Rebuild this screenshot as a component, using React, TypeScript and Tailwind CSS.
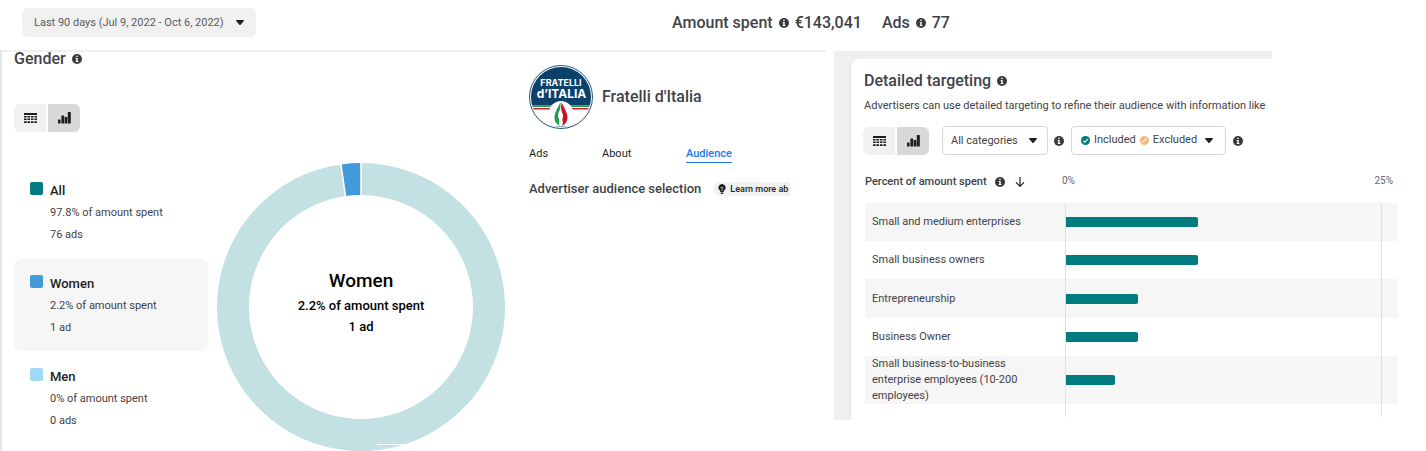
import React from "react";

function InfoIcon() {
  return (
    <svg viewBox="0 0 10 10" className="size-[10px] shrink-0" role="img" aria-label="More information">
      <circle cx="5" cy="5" r="5" fill="#3a3b3d" />
      <path d="M4.200 1.700h1.500v1.400H4.200zM3.700 4.100h2v3h.7v.9H3.700v-.9h.6V5h-.6z" fill="#fff" />
    </svg>
  );
}

function Caret() {
  return (
    <svg viewBox="0 0 8 5" className="pointer-events-none h-[5px] w-2 shrink-0" aria-hidden="true">
      <path d="M.6 0h6.800c.5 0 .8.600.4 1L4.600 4.700a.8.8 0 0 1-1.200 0L.2 1C-.2.600.1 0 .6 0z" fill="#1c1e21" />
    </svg>
  );
}

function ViewToggle() {
  return (
    <div className="flex gap-0.5">
      <button type="button" aria-label="Table view" className="flex h-7 w-8 items-center justify-center rounded-l-md bg-[#f1f1f1]">
        <svg viewBox="0 0 13 10" className="h-[10px] w-[13px]" fill="#1c1e21">
          <path d="M0 0h13v2H0zM0 3h2.600v1.400H0zm3.400 0H6v1.400H3.400zm3.500 0h2.600v1.400H6.900zm3.500 0H13v1.400h-2.600zM0 5.600h2.600V7H0zm3.400 0H6V7H3.400zm3.500 0h2.600V7H6.900zm3.500 0H13V7h-2.600zM0 8.300h2.600V10H0zm3.400 0H6V10H3.400zm3.500 0h2.600V10H6.900zm3.500 0H13V10h-2.600z" />
        </svg>
      </button>
      <button type="button" aria-label="Chart view" aria-pressed="true" className="flex h-7 w-8 items-center justify-center rounded-r-md bg-[#d8d8d8]">
        <svg viewBox="0 0 13 12" className="h-3 w-[13px]" fill="#1c1e21">
          <rect x="0" y="7.500" width="2.600" height="4" rx=".6" />
          <rect x="3.400" y="3.500" width="2.800" height="8" rx=".6" />
          <rect x="6.700" y="5" width="2.700" height="6.500" rx=".6" />
          <rect x="9.800" y="0" width="3" height="11.500" rx=".6" />
        </svg>
      </button>
    </div>
  );
}

const genders = [
  { name: "All", share: "97.8% of amount spent", ads: "76 ads", swatch: "bg-[#007b80]", card: "" },
  { name: "Women", share: "2.2% of amount spent", ads: "1 ad", swatch: "bg-[#429bd8]", card: "bg-[#f6f6f6]" },
  { name: "Men", share: "0% of amount spent", ads: "0 ads", swatch: "bg-[#9fd9f6]", card: "" },
];

function point(radius: number, degrees: number) {
  const a = (degrees * Math.PI) / 180;
  return `${144 + radius * Math.sin(a)} ${144 - radius * Math.cos(a)}`;
}

function arc(from: number, to: number) {
  const large = to - from > 180 ? 1 : 0;
  return `M${point(144, from)}A144 144 0 ${large} 1 ${point(144, to)}L${point(112, to)}A112 112 0 ${large} 0 ${point(112, from)}Z`;
}

function Donut() {
  return (
    <div className="grid w-[288px] shrink-0 place-items-center">
      <svg viewBox="0 0 288 288" className="col-start-1 row-start-1 block w-full" aria-hidden="true">
        <path d={arc(0, 352)} fill="#c3e0e2" />
        <path d={arc(352, 360)} fill="#429bd8" />
        <path d={`M${point(146, 352)}L${point(110, 352)}M${point(146, 0)}L${point(110, 0)}`} stroke="#fff" strokeWidth="1.600" />
        <path d="M160 281.500h27" stroke="#fff" strokeWidth="1" />
      </svg>
      <div className="col-start-1 row-start-1 pb-2.5 text-center font-medium text-black">
        <p className="text-[19px] leading-7">Women</p>
        <p className="text-[13px] leading-[21px]">2.2% of amount spent</p>
        <p className="text-[13px] leading-[21px]">1 ad</p>
      </div>
    </div>
  );
}

function Logo() {
  return (
    <svg viewBox="0 0 64 64" className="size-16 shrink-0" role="img" aria-label="Fratelli d'Italia logo">
      <defs>
        <clipPath id="disc">
          <circle cx="32" cy="32" r="30" />
        </clipPath>
      </defs>
      <circle cx="32" cy="32" r="31.500" fill="#fff" stroke="#0b416b" strokeWidth=".9" />
      <g clipPath="url(#disc)">
        <path d="M0 0h64v40.500H0z" fill="#0b416b" />
        <path d="M0 40.500h64V42H0z" fill="#1f9a4c" />
        <path d="M0 42h64v1H0z" fill="#fff" />
        <path d="M0 43h64v1.500H0z" fill="#d0222d" />
        <circle cx="32" cy="48" r="12" fill="#fff" />
        <path d="M25.500 61.500h13V64h-13z" fill="#0b416b" />
      </g>
      <path d="M31.500 37c-1.500 4-5.500 9-6 15 0 4 2 7.500 5.500 9-1.500-3-1.500-5 .5-8-2-2-2-4 0-6z" fill="#1f9a4c" />
      <path d="M32.500 37c1.500 4 5.500 9 6 15 0 4-2 7.500-5.500 9 1-3 1-5-.5-8 2-2 2-4 0-6z" fill="#c91522" />
      <path d="M31.700 42c-.3 3-2.700 5-2.700 8.500s1.700 3 1.200 5.500-.7 3 1.500 5.500c2.300-2.500 2-3.500 1.500-5.500s1-2 .5-5-1.600-6-2-9z" fill="#fff" />
      <path d="M32 38c1 4 2.500 6 2.500 9l-2-1z" fill="#c91522" />
      <text x="32" y="21" textAnchor="middle" fill="#fff" className="font-['Inter',sans-serif] text-[9px] font-bold">FRATELLI</text>
      <text x="32.500" y="32.500" textAnchor="middle" fill="#fff" className="font-['Inter',sans-serif] text-[12px] font-bold">d’ITALIA</text>
    </svg>
  );
}

const segments = [
  { label: "Small and medium enterprises", percent: 10.6, row: "h-[38px] bg-[#f6f6f6]" },
  { label: "Small business owners", percent: 10.6, row: "h-[38px]" },
  { label: "Entrepreneurship", percent: 5.8, row: "h-[39px] bg-[#f6f6f6]" },
  { label: "Business Owner", percent: 5.8, row: "h-[38px]" },
  { label: "Small business-to-business enterprise employees (10-200 employees)", percent: 4, row: "h-12 bg-[#f6f6f6]" },
];

function TargetingTable() {
  return (
    <table className="w-full table-fixed border-collapse text-[11px] text-[#3f4247]">
      <colgroup>
        <col className="w-[200px]" />
        <col />
        <col className="w-[17px]" />
      </colgroup>
      <thead>
        <tr className="h-[42px]">
          <th scope="col" className="p-0 text-left font-medium">
            <span className="flex items-center gap-2">
              Percent of amount spent
              <InfoIcon />
              <button type="button" aria-label="Sort descending" className="ml-0.5">
                <svg viewBox="0 0 10 10" className="size-[10px]" fill="none" stroke="#1c1e21" strokeWidth="1.200">
                  <path d="M5 0v9M1 5.300l4 4 4-4" />
                </svg>
              </button>
            </span>
          </th>
          <th scope="col" colSpan={2} className="p-0 pb-1 font-normal">
            <span className="-ml-[3px] flex justify-between pr-[5px] text-[10px] text-[#65676b]">
              <span>0%</span>
              <span>25%</span>
            </span>
          </th>
        </tr>
      </thead>
      <tbody>
        {segments.map((s) => (
          <tr key={s.label} className={s.row}>
            <th scope="row" className="py-0 pr-8 pl-[7px] text-left leading-4 font-normal">{s.label}</th>
            <td className="border-x border-[#dddfe3] p-0">
              <div className="-ml-px h-[10px] rounded-r-xs bg-[#007b80]" style={{ width: `${(s.percent / 25) * 100}%` }} />
            </td>
            <td className="p-0" />
          </tr>
        ))}
        <tr className="h-[13px]" aria-hidden="true">
          <td className="p-0" />
          <td className="border-x border-[#dddfe3] p-0" />
          <td className="p-0" />
        </tr>
      </tbody>
    </table>
  );
}

export default function App() {
  return (
    <div className="bg-white font-['Roboto',sans-serif] text-[#3f4247]">
      <header className="grid h-[50px] grid-cols-[672fr_754fr]">
        <div className="pt-2 pl-[22px]">
          <div className="grid w-[234px] items-center">
            <select aria-label="Date range" className="col-start-1 row-start-1 h-[29px] appearance-none rounded-md bg-[#f1f1f1] pt-0.5 pl-3 text-[11px] text-[#595b5f]">
              <option>Last 90 days (Jul 9, 2022 - Oct 6, 2022)</option>
            </select>
            <span className="pointer-events-none col-start-1 row-start-1 flex justify-end pr-3">
              <Caret />
            </span>
          </div>
        </div>
        <dl className="flex items-start gap-5 pt-[11px] text-base leading-6 font-medium">
          <div className="flex items-center gap-1.5">
            <dt className="flex items-center gap-1.5">Amount spent <InfoIcon /></dt>
            <dd>€143,041</dd>
          </div>
          <div className="flex items-center gap-1.5">
            <dt className="flex items-center gap-1.5">Ads <InfoIcon /></dt>
            <dd>77</dd>
          </div>
        </dl>
      </header>

      <main className="grid grid-cols-[826fr_592fr] gap-x-2">
        <div className="flex border-t-2 border-l-2 border-t-[#f0f0f0] border-l-[#e6e6e6] pl-3">
          <section className="w-[515px] shrink-0">
            <h2 className="flex items-center gap-1.5 text-base leading-[14px] font-medium">Gender <InfoIcon /></h2>
            <div className="pt-[38px]">
              <ViewToggle />
            </div>
            <div className="flex gap-[9px] pt-[31px]">
              <ul className="flex w-[194px] flex-col gap-px pt-[3px]">
                {genders.map((g) => (
                  <li key={g.name} className={`grid grid-cols-[13px_1fr] gap-x-[7px] rounded-lg pt-[13px] pb-3 pl-4 text-[11px] leading-[22px] ${g.card}`}>
                    <span className={`mt-[3px] size-[13px] rounded-xs ${g.swatch}`} />
                    <h3 className="text-[13px] leading-[23px] font-medium text-[#1c1e21]">{g.name}</h3>
                    <p className="col-start-2">{g.share}</p>
                    <p className="col-start-2">{g.ads}</p>
                  </li>
                ))}
              </ul>
              <Donut />
            </div>
          </section>

          <section className="pt-[13px]">
            <div className="flex items-center gap-[9px]">
              <Logo />
              <h1 className="text-base font-medium">Fratelli d'Italia</h1>
            </div>
            <nav className="grid grid-cols-[73px_84px_auto] justify-start pt-[17px] text-[11px] leading-4 text-[#1c1e21]">
              <a href="#ads">Ads</a>
              <a href="#about">About</a>
              <a href="#audience" aria-current="page" className="border-b border-[#1877f2] font-medium text-[#1877f2]">Audience</a>
            </nav>
            <div className="flex items-center gap-3 pt-[17px]">
              <h2 className="text-[13px] leading-[18px] font-medium whitespace-nowrap">Advertiser audience selection</h2>
              <button type="button" className="flex h-[14px] w-[77px] items-center gap-1 overflow-hidden rounded-l-full bg-[#f1f1f1] pl-[5px] text-[9px] leading-[14px] font-medium whitespace-nowrap text-[#1c1e21]">
                <svg viewBox="0 0 8 10" className="h-[10px] w-2 shrink-0" fill="#1c1e21" aria-hidden="true">
                  <path d="M4 0a3.600 3.600 0 0 1 2 6.600L5.600 8H2.400L2 6.600A3.600 3.600 0 0 1 4 0zM2.600 8.600h2.800L5 10H3z" />
                  <path d="M2.600 3.500h2.800M4 4v3" stroke="#f1f1f1" strokeWidth=".7" />
                </svg>
                Learn more ab
              </button>
            </div>
          </section>
        </div>

        <section className="self-start pt-px">
          <div className="h-2 w-[74%] bg-[#f0f0f0]" />
          <div className="overflow-hidden bg-[#f0f0f0] pl-[17px]">
            <div className="rounded-tl-lg bg-white pt-3 pr-7 pb-[3px] pl-[14px] shadow">
              <h2 className="-ml-px flex items-center gap-1.5 text-base leading-5 font-medium">Detailed targeting <InfoIcon /></h2>
              <p className="-ml-px pt-[6px] text-[11px] leading-[18px]">Advertisers can use detailed targeting to refine their audience with information like</p>
              <div className="-ml-0.5 flex items-center pt-[11px] text-[11px]">
                <ViewToggle />
                <div className="ml-[13px] grid w-[106px] items-center">
                  <select aria-label="Category" className="col-start-1 row-start-1 h-[29px] appearance-none rounded border border-[#d5d6d9] bg-white pt-0.5 pl-2">
                    <option>All categories</option>
                  </select>
                  <span className="pointer-events-none col-start-1 row-start-1 flex justify-end pr-[11px]">
                    <Caret />
                  </span>
                </div>
                <span className="ml-1.5"><InfoIcon /></span>
                <button type="button" aria-haspopup="listbox" className="mx-[7px] flex h-[29px] w-[155px] items-center gap-1 rounded border border-[#d5d6d9] pl-[9px]">
                  <svg viewBox="0 0 9 9" className="size-[9px]" aria-hidden="true">
                    <circle cx="4.500" cy="4.500" r="4.500" fill="#007b80" />
                    <path d="M2.300 4.700l1.500 1.500 3-3.100" fill="none" stroke="#fff" strokeWidth="1.100" />
                  </svg>
                  Included
                  <svg viewBox="0 0 9 9" className="size-[9px]" aria-hidden="true">
                    <circle cx="4.500" cy="4.500" r="4.500" fill="#f9b574" />
                    <path d="M2.300 6.700l4.400-4.400" stroke="#fff" strokeWidth="1.100" />
                  </svg>
                  Excluded
                  <span className="ml-1"><Caret /></span>
                </button>
                <InfoIcon />
              </div>
              <div className="pt-[6px]">
                <TargetingTable />
              </div>
            </div>
          </div>
        </section>
      </main>
    </div>
  );
}
